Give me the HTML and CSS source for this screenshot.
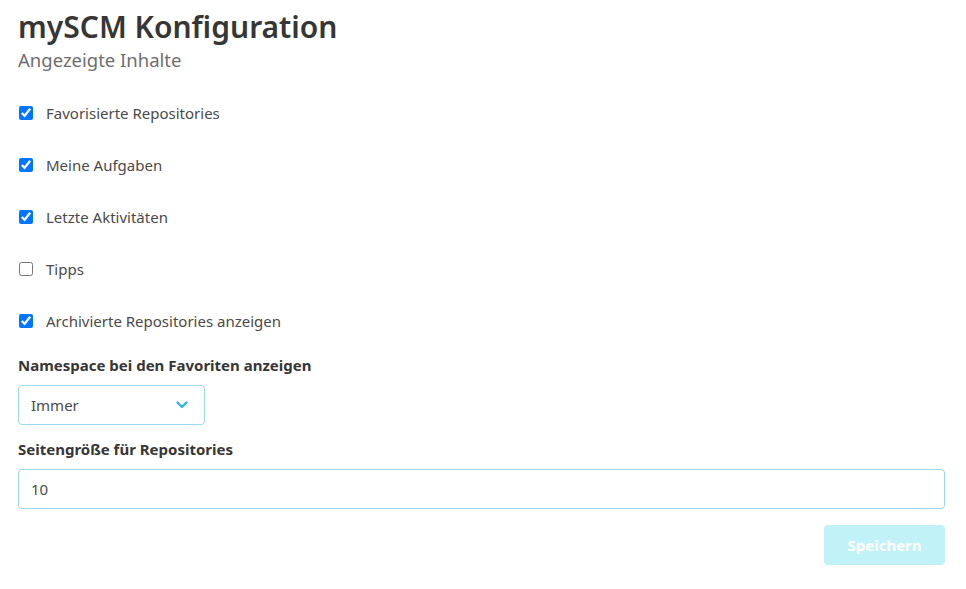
FILE: index.html
```html
<!DOCTYPE html>
<html lang="de">
<head>
<meta charset="utf-8">
<title>mySCM Konfiguration</title>
<link rel="stylesheet" href="styles.css">
</head>
<body>
<main class="page">
  <header class="heading">
    <h1 class="title">mySCM Konfiguration</h1>
    <h2 class="subtitle">Angezeigte Inhalte</h2>
  </header>
  <form class="form">
    <label class="check"><input type="checkbox" checked><span>Favorisierte Repositories</span></label>
    <label class="check"><input type="checkbox" checked><span>Meine Aufgaben</span></label>
    <label class="check"><input type="checkbox" checked><span>Letzte Aktivitäten</span></label>
    <label class="check"><input type="checkbox"><span>Tipps</span></label>
    <label class="check"><input type="checkbox" checked><span>Archivierte Repositories anzeigen</span></label>

    <div class="field">
      <div class="label">Namespace bei den Favoriten anzeigen</div>
      <div class="select">
        <span>Immer</span>
        <svg class="chevron" width="12" height="8" viewBox="0 0 12 8"><path d="M1.5 1.5 L6 6 L10.5 1.5" fill="none" stroke="#33b2e8" stroke-width="2.4" stroke-linecap="round" stroke-linejoin="round"/></svg>
      </div>
    </div>

    <div class="field">
      <div class="label">Seitengröße für Repositories</div>
      <div class="input">10</div>
    </div>

    <div class="actions">
      <button type="button" class="button">Speichern</button>
    </div>
  </form>
</main>
</body>
</html>
```

FILE: styles.css
```css
* { box-sizing: border-box; }
body {
  margin: 0;
  background: #fff;
  font-family: "Noto Sans", "Open Sans", sans-serif;
  color: #4a4a4a;
}
.page {
  padding: 6px 21px 0 18px;
}
.heading { margin-bottom: 29px; }
.title {
  margin: 0;
  font-size: 30px;
  line-height: 41px;
  font-weight: 600;
  color: #363636;
}
.subtitle {
  margin: 0;
  font-size: 18.5px;
  line-height: 25px;
  font-weight: 400;
  color: #6f6f6f;
}
.form { display: flex; flex-direction: column; }
.check {
  display: flex;
  align-items: center;
  height: 24px;
  margin-bottom: 28px;
  font-size: 15px;
  color: #4a4a4a;
}
.check input {
  width: 14px;
  height: 14px;
  margin: 0 13px 0 1px;
}
.check:nth-of-type(5) { margin-bottom: 21px; }
.field { display: flex; flex-direction: column; margin-bottom: 13px; }
.label {
  font-size: 15px;
  font-weight: 700;
  color: #363636;
  line-height: 22px;
  margin-bottom: 9px;
}
.select, .input {
  height: 40px;
  border: 1px solid #98d8f3;
  border-radius: 4px;
  display: flex;
  align-items: center;
  padding: 0 12px;
  font-size: 15px;
  color: #4a4a4a;
}
.select {
  width: 187px;
  justify-content: space-between;
  padding-right: 16px;
}
.chevron { display: block; }
.actions { display: flex; justify-content: flex-end; margin-top: 3px; }
.button {
  width: 121px;
  height: 40px;
  border: none;
  border-radius: 4px;
  background: #c1f2f7;
  color: #fff;
  font-family: inherit;
  font-size: 15px;
  font-weight: 700;
}
```
